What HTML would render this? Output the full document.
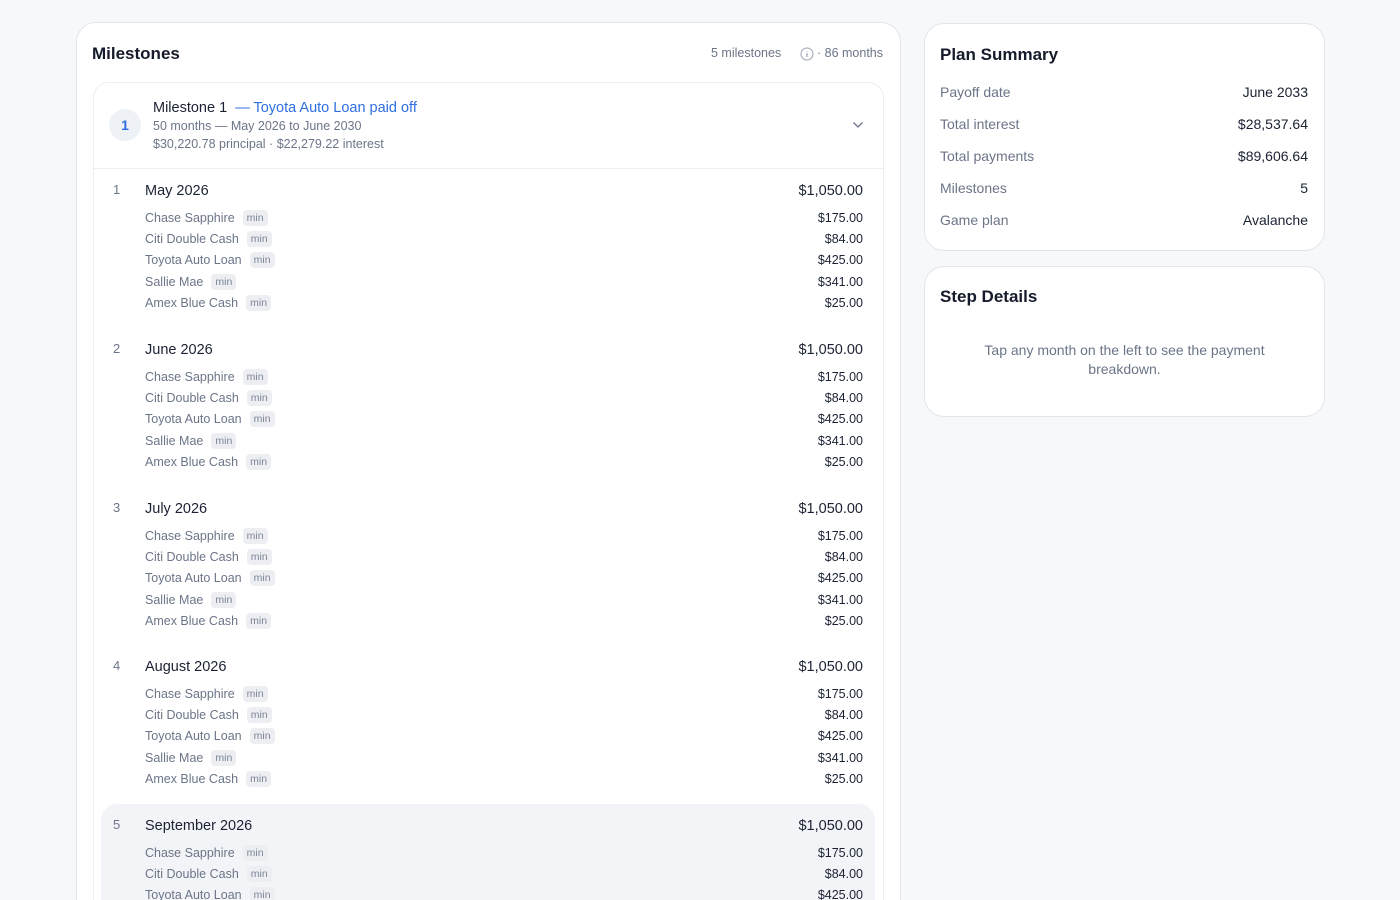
<!DOCTYPE html>
<html style="width:1400px;height:900px;overflow:hidden"><head><meta charset="utf-8"><style>
*{box-sizing:border-box;margin:0;padding:0}
body{width:1400px;height:900px;overflow:hidden;background:#f7f8fa;font-family:"Liberation Sans",sans-serif;color:#1a2233}
#wrap{position:relative;width:1400px;height:900px;overflow:hidden}
.card{position:absolute;background:#fff;border:1px solid #e2e5eb;border-radius:20px}
.abs{position:absolute;white-space:nowrap}
.h{font-weight:bold;font-size:17px;color:#151b2b}
.g{color:#6b7588}
.pill{display:inline-block;background:#eceef2;color:#7b8496;font-size:10.5px;border-radius:4px;padding:1px 4px;margin-left:8px;line-height:14px;vertical-align:1px}
.lab{font-size:12.5px;color:#6b7588;line-height:16px}
</style></head><body><div id="wrap">
<div class="card" style="left:76px;top:22px;width:825px;height:900px;border-radius:20px"></div>
<div class="abs h" style="left:92px;top:44px">Milestones</div>
<div class="abs g" style="left:711px;top:46px;font-size:12.5px">5 milestones</div>
<svg class="abs" style="left:800px;top:47px" width="14" height="14" viewBox="0 0 14 14"><circle cx="7" cy="7" r="6" fill="none" stroke="#9aa2b1" stroke-width="1"/><path d="M7 6v4M7 4v.5" stroke="#9aa2b1" stroke-width="1.2"/></svg>
<div class="abs g" style="left:817px;top:46px;font-size:12.5px">· 86 months</div>

<div class="card" style="left:93px;top:82px;width:791px;height:850px;border-radius:16px;border-color:#eceef2"></div>
<div class="abs" style="left:94px;top:168px;width:789px;height:1px;background:#eceef2"></div>
<div class="abs" style="left:109px;top:109px;width:32px;height:32px;border-radius:50%;background:#eef1f6;color:#2f6fe0;font-weight:bold;font-size:14px;text-align:center;line-height:32px">1</div>
<div class="abs" style="left:153px;top:100px;font-size:14.5px">Milestone 1 <span style="color:#2f6fe0;margin-left:4px">— Toyota Auto Loan paid off</span></div>
<div class="abs g" style="left:153px;top:119px;font-size:12.5px">50 months — May 2026 to June 2030</div>
<div class="abs g" style="left:153px;top:137px;font-size:12.5px">$30,220.78 principal · $22,279.22 interest</div>
<svg class="abs" style="left:852px;top:121px" width="12" height="8" viewBox="0 0 12 8"><path d="M1.5 1.5l4.5 4.5 4.5-4.5" fill="none" stroke="#6b7588" stroke-width="1.3"/></svg>

<div class="abs" style="left:101px;top:804px;width:774px;height:120px;border-radius:16px;background:#f3f4f7"></div>

<div id="rows"></div>

<div class="card" style="left:924px;top:23px;width:401px;height:228px"></div>
<div class="abs h" style="left:940px;top:45px">Plan Summary</div>
<div class="abs lab" style="left:940px;top:84px;font-size:14px">Payoff date</div><div class="abs" style="right:92px;top:84px;font-size:14px">June 2033</div>
<div class="abs lab" style="left:940px;top:116px;font-size:14px">Total interest</div><div class="abs" style="right:92px;top:116px;font-size:14px">$28,537.64</div>
<div class="abs lab" style="left:940px;top:148px;font-size:14px">Total payments</div><div class="abs" style="right:92px;top:148px;font-size:14px">$89,606.64</div>
<div class="abs lab" style="left:940px;top:180px;font-size:14px">Milestones</div><div class="abs" style="right:92px;top:180px;font-size:14px">5</div>
<div class="abs lab" style="left:940px;top:212px;font-size:14px">Game plan</div><div class="abs" style="right:92px;top:212px;font-size:14px">Avalanche</div>

<div class="card" style="left:924px;top:266px;width:401px;height:151px"></div>
<div class="abs h" style="left:940px;top:287px">Step Details</div>
<div class="abs g" style="left:924px;width:401px;top:341px;font-size:14px;text-align:center;line-height:19px;white-space:normal;padding:0 40px">Tap any month on the left to see the payment breakdown.</div>
</div>
<script>
var months=["May 2026","June 2026","July 2026","August 2026","September 2026"];
var items=[["Chase Sapphire","$175.00"],["Citi Double Cash","$84.00"],["Toyota Auto Loan","$425.00"],["Sallie Mae","$341.00"],["Amex Blue Cash","$25.00"]];
var offs=[27,48,69,91,112],h="";
for(var i=0;i<5;i++){var t=190+158.75*i;
h+='<div class="abs g" style="left:113px;top:'+(t-8)+'px;font-size:13px">'+(i+1)+'</div>';
h+='<div class="abs" style="left:145px;top:'+(t-7)+'px;font-size:14.5px">'+months[i]+'</div>';
h+='<div class="abs" style="right:537px;top:'+(t-7)+'px;font-size:14.5px">$1,050.00</div>';
for(var j=0;j<5;j++){var y=t+offs[j]-8;if(y>890)continue;
h+='<div class="abs lab" style="left:145px;top:'+(y+1)+'px">'+items[j][0]+'<span class="pill">min</span></div>';
h+='<div class="abs" style="right:537px;top:'+(y+1)+'px;font-size:12.5px;line-height:16px">'+items[j][1]+'</div>';}}
document.getElementById("rows").innerHTML=h;
</script>
</body></html>
